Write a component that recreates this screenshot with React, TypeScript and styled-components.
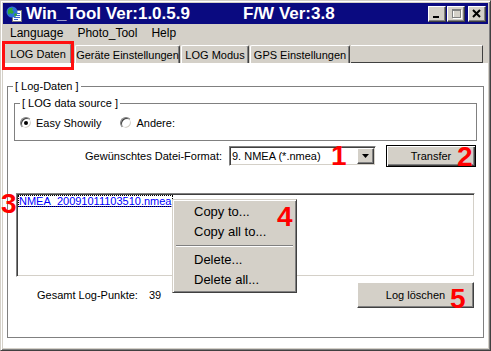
import React from "react";
import styled, { createGlobalStyle, css } from "styled-components";

const face = "#d4d0c8";
const shadow = "#808080";
const dark = "#404040";
const light = "#ffffff";
const navy = "#0a0a80";

const raised = css`
  border: 1px solid;
  border-color: ${light} ${dark} ${dark} ${light};
  box-shadow: inset -1px -1px ${shadow};
`;

const sunken = css`
  border: 1px solid;
  border-color: ${shadow} ${light} ${light} ${shadow};
  box-shadow: inset 1px 1px ${dark}, inset -1px -1px ${face};
`;

const GlobalStyle = createGlobalStyle`
  html, body {
    margin: 0;
    padding: 0;
    background: ${face};
  }
  body {
    font-family: "Liberation Sans", Arial, sans-serif;
    font-size: 11px;
    color: #000;
  }
  * {
    box-sizing: border-box;
  }
`;

const Window = styled.div`
  position: relative;
  width: 491px;
  height: 351px;
  background: ${face};
  border: 1px solid;
  border-color: ${face} ${dark} ${dark} ${face};
  box-shadow: inset 1px 1px ${light}, inset -1px -1px ${shadow};
  padding: 2px;
  display: flex;
  flex-direction: column;
`;

const TitleBar = styled.div`
  height: 21px;
  background: ${navy};
  color: #fff;
  display: flex;
  align-items: center;
  padding: 0 2px 0 3px;
  flex-shrink: 0;
`;

const TitleText = styled.span<{ $width?: number }>`
  font-size: 17px;
  font-weight: bold;
  white-space: nowrap;
  width: ${(p) => (p.$width ? `${p.$width}px` : "auto")};
  margin-left: 4px;
  line-height: 21px;
`;

const CaptionGroup = styled.div`
  margin-left: auto;
  display: flex;
  gap: 1px;
`;

const CaptionButton = styled.div<{ $gapLeft?: number }>`
  width: 18px;
  height: 16px;
  background: ${face};
  ${raised};
  margin-left: ${(p) => p.$gapLeft ?? 0}px;
  display: flex;
  align-items: center;
  justify-content: center;

  svg {
    display: block;
  }
`;

const MenuBar = styled.div`
  height: 17px;
  margin-top: 1px;
  display: flex;
  align-items: center;
  flex-shrink: 0;
`;

const MenuItem = styled.span`
  font-size: 12px;
  padding: 0 7px;
  line-height: 17px;
`;

const TabStrip = styled.div`
  height: 21px;
  display: flex;
  align-items: flex-end;
  padding-left: 1px;
  flex-shrink: 0;
`;

const Tab = styled.div<{ $active?: boolean; $width: number }>`
  width: ${(p) => p.$width}px;
  height: ${(p) => (p.$active ? 20 : 18)}px;
  margin-right: ${(p) => (p.$active ? 3 : 1)}px;
  background: ${face};
  border-top: 1px solid ${light};
  border-left: 1px solid ${light};
  border-right: 1px solid ${dark};
  box-shadow: inset -1px 0 ${shadow};
  border-radius: 2px 2px 0 0;
  display: flex;
  align-items: center;
  justify-content: center;
  white-space: nowrap;
  font-size: 11px;
`;

const TabFiller = styled.div`
  flex: 1;
  height: 18px;
  margin-right: 5px;
  background: ${face};
  border-top: 1px solid ${light};
  border-right: 1px solid ${dark};
  border-bottom: 1px solid ${dark};
`;

const Page = styled.div`
  flex: 1;
  background: #fff;
  padding: 17px 4px 0 4px;
`;

const Group = styled.fieldset`
  margin: 0;
  padding: 0 6px 29px 6px;
  border: 1px solid ${shadow};
  min-width: 0;
`;

const SubGroup = styled.fieldset`
  margin: 4px 0 0 0;
  padding: 0 5px 11px 5px;
  border: 1px solid ${shadow};
  min-width: 0;
`;

const Legend = styled.legend<{ $offset?: number }>`
  font-size: 11px;
  line-height: 13px;
  padding: 0 2px;
  margin-left: ${(p) => p.$offset ?? 0}px;
`;

const RadioRow = styled.div`
  margin-top: 6px;
  height: 13px;
  display: flex;
  align-items: center;
`;

const RadioOption = styled.label<{ $gapRight?: number }>`
  display: flex;
  align-items: center;
  gap: 4px;
  margin-right: ${(p) => p.$gapRight ?? 0}px;
  white-space: nowrap;
`;

const RadioDot = styled.span<{ $checked?: boolean }>`
  position: relative;
  width: 12px;
  height: 12px;
  border-radius: 50%;
  background: #fff;
  border: 1px solid;
  border-color: ${shadow} ${light} ${light} ${shadow};
  box-shadow: inset 1px 1px ${dark}, inset -1px -1px ${face};

  &::after {
    content: "";
    display: ${(p) => (p.$checked ? "block" : "none")};
    position: absolute;
    left: 3px;
    top: 3px;
    width: 4px;
    height: 4px;
    border-radius: 50%;
    background: #000;
  }
`;

const FormatRow = styled.div`
  margin-top: 4px;
  height: 22px;
  display: flex;
  align-items: center;
  justify-content: flex-end;
  padding-right: 1px;
`;

const FieldLabel = styled.span`
  margin-right: 7px;
  white-space: nowrap;
`;

const Combo = styled.div`
  width: 147px;
  height: 20px;
  background: #fff;
  ${sunken};
  display: flex;
  align-items: center;
  padding: 1px 1px 1px 2px;
`;

const ComboText = styled.span`
  flex: 1;
  white-space: nowrap;
`;

const ComboArrow = styled.div`
  width: 17px;
  height: 16px;
  background: ${face};
  ${raised};
  display: flex;
  align-items: center;
  justify-content: center;
`;

const Button = styled.div<{ $width: number; $height: number; $default?: boolean }>`
  width: ${(p) => p.$width}px;
  height: ${(p) => p.$height}px;
  background: ${face};
  display: flex;
  align-items: center;
  justify-content: center;
  white-space: nowrap;
  ${(p) =>
    p.$default
      ? css`
          margin-left: 10px;
          border: 1px solid #000;
          box-shadow: inset 1px 1px ${light}, inset -1px -1px ${dark},
            inset -2px -2px ${shadow};
        `
      : css`
          ${raised};
        `}
`;

const ListBox = styled.div`
  margin: 26px 2px 0 2px;
  height: 84px;
  background: #fff;
  ${sunken};
  padding: 1px;
`;

const ListItem = styled.span`
  display: inline-block;
  color: #0000ff;
  text-decoration: underline;
  line-height: 12px;
  padding: 0 1px;
  outline: 1px dotted #000;
  outline-offset: -1px;
  white-space: nowrap;
`;

const BottomRow = styled.div`
  margin-top: 5px;
  height: 26px;
  display: flex;
  align-items: center;
  padding-left: 23px;
  padding-right: 3px;
`;

const Count = styled.span`
  margin-left: 11px;
`;

const Push = styled.div`
  margin-left: auto;
`;

const ContextMenu = styled.div`
  position: absolute;
  left: 171px;
  top: 198px;
  width: 125px;
  height: 94px;
  background: ${face};
  border: 1px solid;
  border-color: ${face} ${dark} ${dark} ${face};
  box-shadow: inset 1px 1px ${light}, inset -1px -1px ${shadow};
  padding: 2px;
`;

const ContextItem = styled.div`
  height: 20px;
  line-height: 20px;
  font-size: 13px;
  padding-left: 19px;
  white-space: nowrap;
`;

const ContextSeparator = styled.div`
  height: 2px;
  margin: 3px 1px;
  border-top: 1px solid ${shadow};
  border-bottom: 1px solid ${light};
`;

const Marker = styled.span<{ $x: number; $y: number }>`
  position: absolute;
  left: ${(p) => p.$x}px;
  top: ${(p) => p.$y}px;
  color: #ff0000;
  font-family: "Liberation Sans", Arial, sans-serif;
  font-weight: bold;
  font-size: 28px;
  line-height: 28px;
  pointer-events: none;
`;

const Highlight = styled.div`
  position: absolute;
  left: 1px;
  top: 40px;
  width: 72px;
  height: 29px;
  border: 3px solid #ff1010;
`;

const AppIcon = () => (
  <svg width="16" height="16" viewBox="0 0 16 16">
    <rect x="6.5" y="4.5" width="9" height="11" fill="#fff" stroke="#7a7a7a" />
    <rect x="8" y="7" width="6" height="1" fill="#3a5fcd" />
    <rect x="8" y="9" width="6" height="1" fill="#3a5fcd" />
    <rect x="8" y="11" width="6" height="1" fill="#3a5fcd" />
    <rect x="8" y="13" width="4" height="1" fill="#3a5fcd" />
    <circle cx="6" cy="6" r="5.5" fill="#2f6fd8" />
    <path d="M2 4 Q4 1 7 2 L6 4 L8 6 L6 8 L4 7 L3 9 Q1 7 2 4 Z" fill="#2fa83a" />
    <path d="M8 8 L10 7 L11 9 L9 11 Z" fill="#2fa83a" />
  </svg>
);

const MinGlyph = () => (
  <svg width="10" height="10" viewBox="0 0 10 10">
    <rect x="1" y="7" width="6" height="2" fill="#000" />
  </svg>
);

const MaxGlyph = () => (
  <svg width="11" height="11" viewBox="0 0 11 11">
    <rect x="2.5" y="2.5" width="8" height="8" fill="none" stroke="#fff" />
    <rect x="1.5" y="1.5" width="8" height="8" fill="none" stroke={shadow} />
    <rect x="1" y="2" width="9" height="1" fill={shadow} />
  </svg>
);

const CloseGlyph = () => (
  <svg width="10" height="9" viewBox="0 0 10 9">
    <path d="M1 1 L8 8 M8 1 L1 8" stroke="#000" strokeWidth="2" />
  </svg>
);

const DownArrow = () => (
  <svg width="7" height="4" viewBox="0 0 7 4">
    <path d="M0 0 H7 L3.5 4 Z" fill="#000" />
  </svg>
);

const App = () => {
  return (
    <>
      <GlobalStyle />
      <Window>
        <TitleBar>
          <AppIcon />
          <TitleText $width={213}>Win_Tool Ver:1.0.5.9</TitleText>
          <TitleText>F/W Ver:3.8</TitleText>
          <CaptionGroup>
            <CaptionButton>
              <MinGlyph />
            </CaptionButton>
            <CaptionButton>
              <MaxGlyph />
            </CaptionButton>
            <CaptionButton $gapLeft={2}>
              <CloseGlyph />
            </CaptionButton>
          </CaptionGroup>
        </TitleBar>

        <MenuBar>
          <MenuItem>Language</MenuItem>
          <MenuItem>Photo_Tool</MenuItem>
          <MenuItem>Help</MenuItem>
        </MenuBar>

        <TabStrip>
          <Tab $active $width={68}>LOG Daten</Tab>
          <Tab $width={105}>Geräte Einstellungen</Tab>
          <Tab $width={68}>LOG Modus</Tab>
          <Tab $width={100}>GPS Einstellungen</Tab>
          <TabFiller />
        </TabStrip>

        <Page>
          <Group>
            <Legend $offset={-1}>[ Log-Daten ]</Legend>
            <SubGroup>
              <Legend>[ LOG data source ]</Legend>
              <RadioRow>
                <RadioOption $gapRight={19}>
                  <RadioDot $checked />
                  Easy Showily
                </RadioOption>
                <RadioOption>
                  <RadioDot />
                  Andere:
                </RadioOption>
              </RadioRow>
            </SubGroup>

            <FormatRow>
              <FieldLabel>Gewünschtes Datei-Format:</FieldLabel>
              <Combo>
                <ComboText>9. NMEA (*.nmea)</ComboText>
                <ComboArrow>
                  <DownArrow />
                </ComboArrow>
              </Combo>
              <Button $width={90} $height={22} $default>
                Transfer
              </Button>
            </FormatRow>

            <ListBox>
              <ListItem>NMEA_20091011103510.nmea</ListItem>
            </ListBox>

            <BottomRow>
              <span>Gesamt Log-Punkte:</span>
              <Count>39</Count>
              <Push>
                <Button $width={117} $height={26}>
                  Log löschen
                </Button>
              </Push>
            </BottomRow>
          </Group>
        </Page>

        <ContextMenu>
          <ContextItem>Copy to...</ContextItem>
          <ContextItem>Copy all to...</ContextItem>
          <ContextSeparator />
          <ContextItem>Delete...</ContextItem>
          <ContextItem>Delete all...</ContextItem>
        </ContextMenu>

        <Highlight />
        <Marker $x={330} $y={141}>1</Marker>
        <Marker $x={456} $y={142}>2</Marker>
        <Marker $x={0} $y={189}>3</Marker>
        <Marker $x={276} $y={202}>4</Marker>
        <Marker $x={449} $y={284}>5</Marker>
      </Window>
    </>
  );
};

export default App;
